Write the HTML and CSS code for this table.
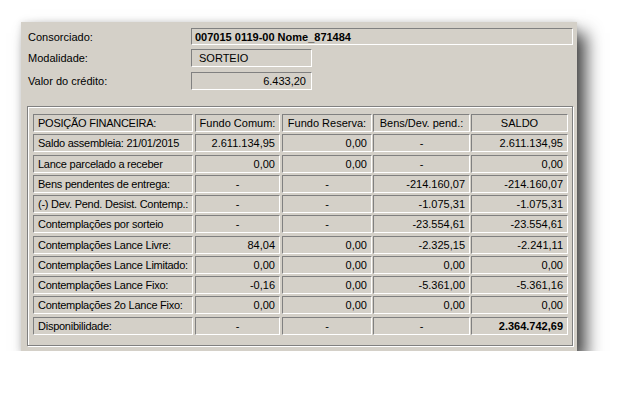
FILE: index.html
```html
<!DOCTYPE html>
<html lang="pt">
<head>
<meta charset="utf-8">
<link rel="stylesheet" href="styles.css">
</head>
<body>
<div class="page">
  <div class="panel">
    <div class="form">
      <div class="frow r1">
        <div class="lbl">Consorciado:</div>
        <div class="field f-wide bold">007015 0119-00 Nome_871484</div>
      </div>
      <div class="frow r2">
        <div class="lbl">Modalidade:</div>
        <div class="field f-short pad-l">SORTEIO</div>
      </div>
      <div class="frow r3">
        <div class="lbl">Valor do crédito:</div>
        <div class="field f-short right">6.433,20</div>
      </div>
    </div>
    <div class="group">
      <div class="grid">
        <div class="cell c1 left">POSIÇÃO FINANCEIRA:</div>
        <div class="cell c2 center">Fundo Comum:</div>
        <div class="cell c3 center">Fundo Reserva:</div>
        <div class="cell c4 center">Bens/Dev. pend.:</div>
        <div class="cell c5 center">SALDO</div>

        <div class="cell c1 left">Saldo assembleia: 21/01/2015</div>
        <div class="cell c2 right">2.611.134,95</div>
        <div class="cell c3 right">0,00</div>
        <div class="cell c4 center">-</div>
        <div class="cell c5 right">2.611.134,95</div>

        <div class="cell c1 left">Lance parcelado a receber</div>
        <div class="cell c2 right">0,00</div>
        <div class="cell c3 right">0,00</div>
        <div class="cell c4 center">-</div>
        <div class="cell c5 right">0,00</div>

        <div class="cell c1 left">Bens pendentes de entrega:</div>
        <div class="cell c2 center">-</div>
        <div class="cell c3 center">-</div>
        <div class="cell c4 right">-214.160,07</div>
        <div class="cell c5 right">-214.160,07</div>

        <div class="cell c1 left">(-) Dev. Pend. Desist. Contemp.:</div>
        <div class="cell c2 center">-</div>
        <div class="cell c3 center">-</div>
        <div class="cell c4 right">-1.075,31</div>
        <div class="cell c5 right">-1.075,31</div>

        <div class="cell c1 left">Contemplações por sorteio</div>
        <div class="cell c2 center">-</div>
        <div class="cell c3 center">-</div>
        <div class="cell c4 right">-23.554,61</div>
        <div class="cell c5 right">-23.554,61</div>

        <div class="cell c1 left">Contemplações Lance Livre:</div>
        <div class="cell c2 right">84,04</div>
        <div class="cell c3 right">0,00</div>
        <div class="cell c4 right">-2.325,15</div>
        <div class="cell c5 right">-2.241,11</div>

        <div class="cell c1 left">Contemplações Lance Limitado:</div>
        <div class="cell c2 right">0,00</div>
        <div class="cell c3 right">0,00</div>
        <div class="cell c4 right">0,00</div>
        <div class="cell c5 right">0,00</div>

        <div class="cell c1 left">Contemplações Lance Fixo:</div>
        <div class="cell c2 right">-0,16</div>
        <div class="cell c3 right">0,00</div>
        <div class="cell c4 right">-5.361,00</div>
        <div class="cell c5 right">-5.361,16</div>

        <div class="cell c1 left">Contemplações 2o Lance Fixo:</div>
        <div class="cell c2 right">0,00</div>
        <div class="cell c3 right">0,00</div>
        <div class="cell c4 right">0,00</div>
        <div class="cell c5 right">0,00</div>

        <div class="cell c1 left">Disponibilidade:</div>
        <div class="cell c2 center">-</div>
        <div class="cell c3 center">-</div>
        <div class="cell c4 center">-</div>
        <div class="cell c5 right bold">2.364.742,69</div>
      </div>
    </div>
  </div>
</div>
</body>
</html>
```

FILE: styles.css
```css
html, body {
  margin: 0;
  padding: 0;
  background: #ffffff;
}

body {
  font-family: "Liberation Sans", Arial, sans-serif;
  font-size: 11px;
  color: #000000;
}

.page {
  padding: 22px 0 0 21px;
}

.panel {
  box-sizing: border-box;
  width: 556px;
  height: 329px;
  background: #d4d0c8;
  padding: 6px 0 0 6px;
  box-shadow: 9px 11px 16px rgba(0, 0, 0, 0.72), 0 0 6px rgba(0, 0, 0, 0.12);
}

.form {
  display: flex;
  flex-direction: column;
}

.frow {
  display: flex;
  align-items: stretch;
}

.r1 { height: 17px; }
.r2 { height: 18px; margin-top: 4px; }
.r3 { height: 18px; margin-top: 5px; }

.lbl {
  width: 163px;
  padding-left: 1px;
  display: flex;
  align-items: center;
}

.field {
  box-sizing: border-box;
  border-top: 1px solid #808080;
  border-left: 1px solid #808080;
  border-bottom: 1px solid #ffffff;
  border-right: 1px solid #ffffff;
  display: flex;
  align-items: center;
  white-space: nowrap;
}

.f-wide {
  width: 382px;
  padding-left: 3px;
}

.f-short {
  width: 121px;
}

.pad-l {
  padding-left: 7px;
}

.field.right {
  justify-content: flex-end;
  padding-right: 5px;
}

.bold {
  font-weight: bold;
}

.group {
  box-sizing: border-box;
  width: 546px;
  height: 240px;
  margin-top: 16px;
  border: 1px solid #808080;
  box-shadow: inset 1px 1px 0 #ffffff, 1px 1px 0 #ffffff;
  padding: 7px 0 0 5px;
}

.grid {
  display: grid;
  grid-template-columns: 162px 87px 91px 98px 97px;
  grid-auto-rows: 18px;
  row-gap: 2.27px;
}

.cell {
  box-sizing: border-box;
  border-top: 1px solid #808080;
  border-left: 1px solid #808080;
  border-bottom: 1px solid #ffffff;
  border-right: 1px solid #ffffff;
  display: flex;
  align-items: center;
  white-space: nowrap;
  overflow: hidden;
}

.c1, .c2 {
  margin-right: 2px;
}

.c3, .c4 {
  margin-right: 1px;
}

.cell.left {
  padding-left: 4px;
}

.c1 {
  letter-spacing: -0.25px;
}

.cell.right {
  justify-content: flex-end;
  padding-right: 4px;
}

.cell.center {
  justify-content: center;
}
```
